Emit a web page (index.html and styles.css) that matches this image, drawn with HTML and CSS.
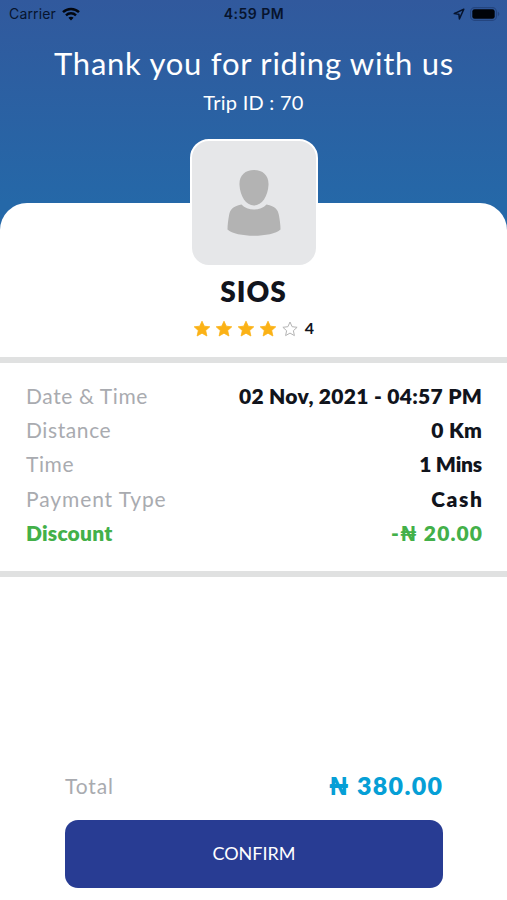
FILE: index.html
```html
<!DOCTYPE html>
<html lang="en">
<head>
<meta charset="utf-8">
<meta name="viewport" content="width=device-width, initial-scale=1">
<title>Trip summary</title>
<link rel="stylesheet" href="styles.css">
</head>
<body>
<div class="screen">
  <header class="hero">
    <div class="status">
      <div class="status-left"><span class="carrier">Carrier</span>
        <svg class="wifi" viewBox="0 0 18 14" fill="none" stroke="#03070f" stroke-width="2.4"><path d="M1 5.2C5.4.9 12.6.9 17 5.2"/><path d="M4 8.3c2.8-2.7 7.2-2.7 10 0"/><path d="M6.4 10.7L9 13.4l2.6-2.7c-1.5-1.3-3.7-1.3-5.2 0z" fill="#03070f" stroke="none"/></svg>
      </div>
      <div class="clock"><span>4:59 PM</span></div>
      <div class="status-right">
        <svg class="locate" viewBox="0 0 12 12" fill="none" stroke="#07142d" stroke-width="1.5" stroke-linejoin="round"><path d="M10.8 1.2L1.2 5.6l4.7.6.5 4.7z"/></svg>
        <svg class="battery" viewBox="0 0 30 14"><rect x=".6" y=".6" width="25.8" height="12.8" rx="4" fill="none" stroke="#24457f" stroke-width="1.1"/><rect x="2.3" y="2.3" width="22.4" height="9.4" rx="2.3" fill="#000308"/><path d="M27.8 4.8c2 .7 2 3.700 0 4.400z" fill="#24457f"/></svg>
      </div>
    </div>
    <h1 class="title"><span>Thank you for riding with us</span></h1>
    <p class="trip"><span>Trip ID : 70</span></p>
  </header>
  <main class="sheet">
    <section class="driver">
      <div class="avatar">
        <svg class="person" viewBox="0 0 54 68" fill="#b3b3b3"><path d="M27 0c9 0 15 5.500 14.500 15C41 26 35 35.500 27 35.500S13 26 12.500 15C12 5.500 18 0 27 0z"/><path d="M14.500 34.500c3 3.500 7.500 5 12.500 5s9.500-1.500 12.500-5c9 2 11.500 5 12.500 11 .8 5 1.500 9 1.500 14C45 67.800 9 67.800.5 59.500c0-5 .7-9 1.500-14 1-6 3.500-9 12.500-11z"/></svg>
      </div>
      <h2 class="name"><span>SIOS</span></h2>
      <div class="rating">
        <svg class="star" viewBox="0 0 18 18"><path d="M9 1.200l2.300 5 5.500.6-4.100 3.700 1.200 5.500L9 13.200 4.100 16l1.200-5.500-4.100-3.700 5.500-.6z"/></svg>
        <svg class="star" viewBox="0 0 18 18"><path d="M9 1.200l2.300 5 5.500.6-4.100 3.700 1.200 5.500L9 13.200 4.100 16l1.200-5.500-4.100-3.700 5.500-.6z"/></svg>
        <svg class="star" viewBox="0 0 18 18"><path d="M9 1.200l2.300 5 5.500.6-4.100 3.700 1.200 5.500L9 13.200 4.100 16l1.200-5.500-4.100-3.700 5.500-.6z"/></svg>
        <svg class="star" viewBox="0 0 18 18"><path d="M9 1.200l2.300 5 5.500.6-4.100 3.700 1.200 5.500L9 13.200 4.100 16l1.200-5.500-4.100-3.700 5.500-.6z"/></svg>
        <svg class="star empty" viewBox="0 0 18 18"><path d="M9 2l2.100 4.700 5 .6-3.700 3.400 1 4.900L9 13.100l-4.400 2.500 1-4.900-3.700-3.400 5-.6z"/></svg>
        <span class="score">4</span>
      </div>
    </section>
    <dl class="details">
      <div class="row"><dt>Date &amp; Time</dt><dd>02 Nov, 2021 - 04:57 PM</dd></div>
      <div class="row"><dt>Distance</dt><dd>0 Km</dd></div>
      <div class="row"><dt>Time</dt><dd class="mins">1 Mins</dd></div>
      <div class="row"><dt class="payment">Payment Type</dt><dd class="cash">Cash</dd></div>
      <div class="row discount"><dt>Discount</dt><dd>-₦ 20.00</dd></div>
    </dl>
    <footer class="checkout">
      <div class="total"><span class="total-label">Total</span><span class="amount">₦ 380.00</span></div>
      <button class="confirm"><span>CONFIRM</span></button>
    </footer>
  </main>
</div>
</body>
</html>
```
FILE: styles.css
```css
* { box-sizing: border-box; margin: 0; padding: 0; }
body { font-family: Lato, "Open Sans", sans-serif; background: #fff; color: #11141c; }
.screen { height: 900px; display: flex; flex-direction: column; overflow: hidden; background: linear-gradient(#31599d 0, #2568a8 203px, #2568a8 240px, #fff 240px); }
.hero { height: 203px; flex: none; color: #fff; text-align: center; }
.status { height: 27px; padding: 0 7px 0 9px; display: grid; grid-template-columns: 1fr auto 1fr; align-items: center; font-family: Inter, sans-serif; font-size: 14px; color: #07142d; }
.status-left, .status-right { display: flex; align-items: center; }
.status-left { gap: 6px; letter-spacing: .15px; }
.status-right { justify-content: flex-end; gap: 5px; }
.clock { font-weight: 600; letter-spacing: .5px; margin-right: 1px; }
.wifi { width: 18px; height: 14px; }
.locate { width: 12px; height: 12px; }
.battery { width: 30px; height: 14px; }
.title { margin-top: 16px; line-height: 40px; font-size: 31px; font-weight: 400; letter-spacing: .75px; white-space: nowrap; padding-left: 1px; }
.trip { margin-top: 6px; line-height: 26px; font-size: 20px; letter-spacing: .25px; }
.sheet { flex: 1; display: flex; flex-direction: column; background: #fff; border-radius: 27px 27px 0 0; }
.driver { height: 160px; flex: none; display: flex; flex-direction: column; align-items: center; border-bottom: 6px solid #e0e1e1; }
.avatar { width: 128px; height: 128px; margin-top: -64px; flex: none; border: 2.500px solid #fff; border-radius: 19px; background: #e6e7e9; display: flex; justify-content: center; padding-top: 29px; }
.person { width: 54px; height: 68px; }
.name { margin-top: 6px; line-height: 36px; font-size: 28px; font-weight: 800; letter-spacing: 1px; }
.rating { margin-top: 10px; height: 20px; display: flex; align-items: center; gap: 4px; }
.star { width: 18px; height: 18px; fill: #fbb216; stroke: #fbb216; stroke-width: .8; stroke-linejoin: round; }
.empty { fill: #fff; stroke: #b4b4b4; stroke-width: 1; }
.score { margin-left: 2px; margin-top: -3px; font-size: 16px; font-weight: 700; }
.details { height: 214px; flex: none; padding: 16px 25px 0 26px; border-bottom: 6px solid #e0e1e1; }
.row { height: 34.200px; display: flex; justify-content: space-between; align-items: center; font-size: 21px; line-height: 34px; }
.row dt { color: #a9abb0; font-weight: 400; letter-spacing: .6px; }
.row dd { font-weight: 800; letter-spacing: .3px; margin-right: -.3px; }
.row .payment { letter-spacing: .9px; }
.row .mins { letter-spacing: -.2px; margin-right: 0; }
.row .cash { letter-spacing: 1.600px; margin-right: -1.600px; }
.row.discount dt { color: #43b049; font-weight: 800; letter-spacing: .2px; }
.row.discount dd { color: #43b049; letter-spacing: 1.100px; margin-right: -1.100px; }
.checkout { margin: auto 64px 12px 65px; }
.total { height: 36px; margin-bottom: 17px; display: flex; justify-content: space-between; align-items: center; }
.total-label { font-size: 21px; color: #a9abb0; letter-spacing: .9px; }
.amount { font-size: 25px; font-weight: 800; color: #069fd6; letter-spacing: 1.300px; margin-right: -.3px; }
.confirm { display: block; width: 100%; height: 68px; padding-bottom: 3px; border: 0; border-radius: 13px; background: #283c93; color: #fff; font: 400 18px Lato, sans-serif; }
```
